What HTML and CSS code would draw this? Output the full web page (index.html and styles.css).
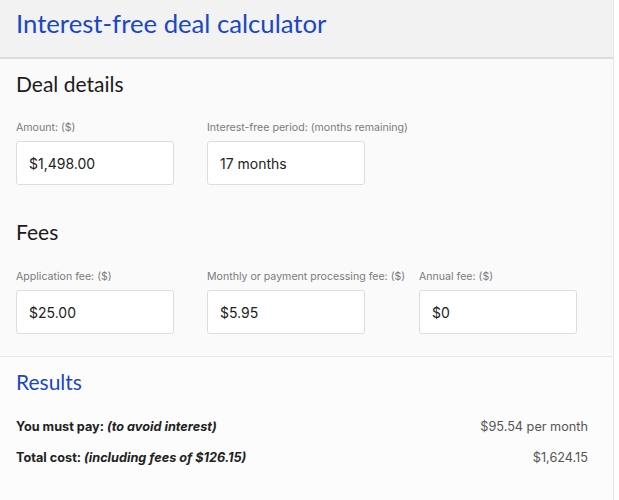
FILE: index.html
```html
<!DOCTYPE html>
<html lang="en">
<head>
  <meta charset="UTF-8" />
  <meta name="viewport" content="width=device-width, initial-scale=1.0"/>
  <title>Interest-free deal calculator</title>
  <link rel="stylesheet" href="styles.css">
</head>
<body>

  <div class="calculator">
    <header class="calc-header">
      <h1 class="calc-title">Interest-free deal calculator</h1>
    </header>

    <section class="calc-section">
      <h2 class="section-title">Deal details</h2>
      <div class="field-row">
        <div class="field field-first">
          <label class="field-label" for="amount">Amount: ($)</label>
          <input class="field-input" id="amount" type="text" value="$1,498.00">
        </div>
        <div class="field">
          <label class="field-label" for="period">Interest-free period: (months remaining)</label>
          <input class="field-input" id="period" type="text" value="17 months">
        </div>
      </div>

      <h2 class="section-title fees-title">Fees</h2>
      <div class="field-row">
        <div class="field field-first">
          <label class="field-label" for="app-fee">Application fee: ($)</label>
          <input class="field-input" id="app-fee" type="text" value="$25.00">
        </div>
        <div class="field field-second">
          <label class="field-label" for="monthly-fee">Monthly or payment processing fee: ($)</label>
          <input class="field-input" id="monthly-fee" type="text" value="$5.95">
        </div>
        <div class="field">
          <label class="field-label" for="annual-fee">Annual fee: ($)</label>
          <input class="field-input" id="annual-fee" type="text" value="$0">
        </div>
      </div>
    </section>

    <section class="results">
      <h2 class="results-title">Results</h2>
      <div class="result-row">
        <span class="result-label">You must pay: <em>(to avoid interest)</em></span>
        <span class="result-value">$95.54 per month</span>
      </div>
      <div class="result-row">
        <span class="result-label">Total cost: <em>(including fees of $126.15)</em></span>
        <span class="result-value">$1,624.15</span>
      </div>
    </section>
  </div>

</body>
</html>
```

FILE: styles.css
```css
* {
  box-sizing: border-box;
  margin: 0;
  padding: 0;
}

body {
  font-family: Inter, 'Open Sans', sans-serif;
  background-color: #fefefe;
  color: #222;
}

.calculator {
  width: 614px;
  min-height: 500px;
  background-color: #fafafa;
  border-right: 1px solid #e6e6e6;
}

/* HEADER */
.calc-header {
  height: 59px;
  background-color: #f2f2f2;
  border-bottom: 2px solid #dcdcdc;
  padding: 8px 16px 0;
}

.calc-title {
  font-family: Lato, sans-serif;
  font-weight: 400;
  font-size: 25.7px;
  color: #1a47c6;
}

/* INPUTS */
.calc-section {
  padding: 12px 16px 22px;
  border-bottom: 1px solid #e8e8e8;
}

.section-title {
  font-family: Lato, sans-serif;
  font-weight: 400;
  font-size: 21px;
  color: #1b1b1b;
  margin-bottom: 25px;
}

.fees-title {
  margin-top: 34px;
  margin-bottom: 26px;
}

.field-row {
  display: flex;
}

.field {
  display: flex;
  flex-direction: column;
}

.field-first {
  width: 191px;
}

.field-second {
  width: 212px;
}

.field-label {
  font-size: 10.6px;
  color: #7a7a7a;
  margin-bottom: 7px;
}

.field-input {
  width: 158px;
  height: 44px;
  border: 1px solid #dddddd;
  border-radius: 3px;
  background-color: white;
  padding: 0 12px;
  font-family: inherit;
  font-size: 14px;
  color: #222;
}

/* RESULTS */
.results {
  background-color: #fcfcfc;
  padding: 12px 25px 30px 16px;
}

.results-title {
  font-family: Lato, sans-serif;
  font-weight: 400;
  font-size: 21px;
  color: #1a47c6;
  margin-bottom: 25px;
}

.result-row {
  display: flex;
  justify-content: space-between;
  font-size: 12.7px;
  margin-bottom: 16px;
}

.result-label {
  font-weight: 700;
  color: #222;
}

.result-value {
  color: #555;
}
```
